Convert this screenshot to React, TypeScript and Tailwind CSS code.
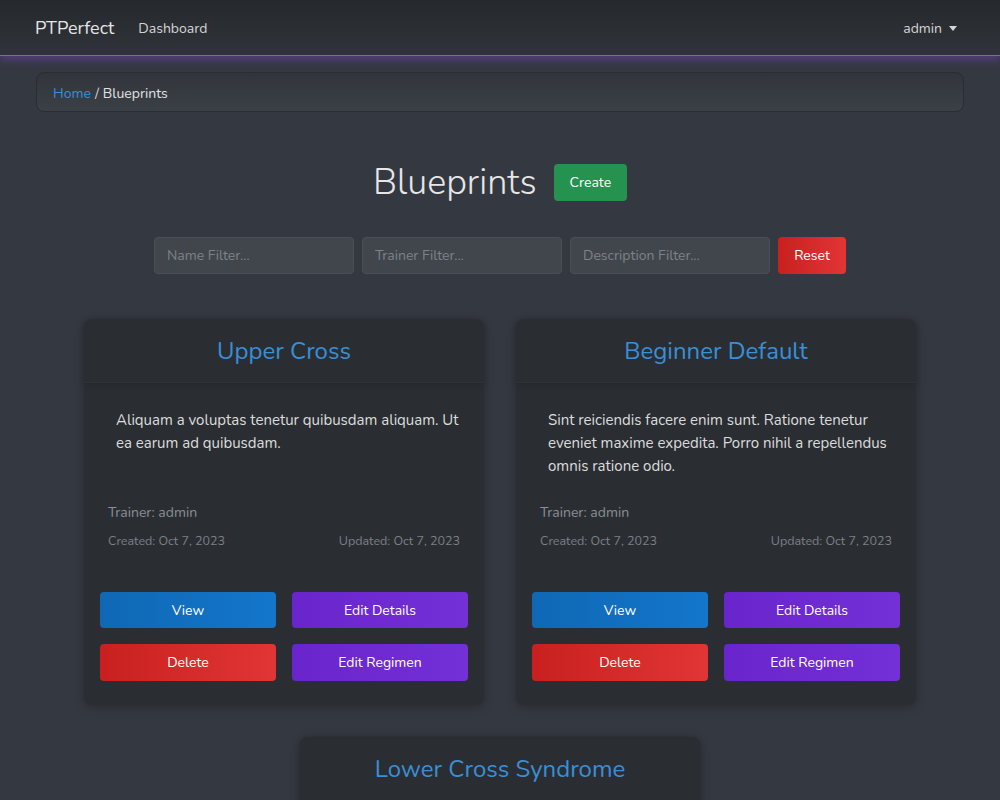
import React from 'react';

type Blueprint = {
  name: string;
  description: string;
  trainer: string;
  created: string;
  updated: string;
};

const blueprints: Blueprint[] = [
  {
    name: 'Upper Cross',
    description: 'Aliquam a voluptas tenetur quibusdam aliquam. Ut ea earum ad quibusdam.',
    trainer: 'admin',
    created: 'Oct 7, 2023',
    updated: 'Oct 7, 2023',
  },
  {
    name: 'Beginner Default',
    description: 'Sint reiciendis facere enim sunt. Ratione tenetur eveniet maxime expedita. Porro nihil a repellendus omnis ratione odio.',
    trainer: 'admin',
    created: 'Oct 7, 2023',
    updated: 'Oct 7, 2023',
  },
  {
    name: 'Lower Cross Syndrome',
    description: 'Et quia dolorem aut. Voluptatem repellat nam distinctio.',
    trainer: 'admin',
    created: 'Oct 7, 2023',
    updated: 'Oct 7, 2023',
  },
];

function BlueprintCard({ bp }: { bp: Blueprint }) {
  return (
    <div className="w-[400px] rounded-lg bg-[#2a2e33] shadow-[0_2px_10px_rgba(0,0,0,0.25)] flex flex-col">
      {/* Header */}
      <div className="h-[64px] flex items-center justify-center border-b border-[#2f3338] shadow-[0_2px_6px_rgba(0,0,0,0.12)] rounded-t-lg">
        <h2 className="text-[24px] text-[#3a8fd6] leading-none pt-[1px]">{bp.name}</h2>
      </div>

      {/* Body */}
      <div className="pl-8 pr-[18px] pt-[26px] h-[120px]">
        <p className="text-[15px] leading-[23px] text-[#dcdcdc]">{bp.description}</p>
      </div>

      <div className="px-6">
        <div className="text-[14px] text-[#8b8f95] leading-[20px]">Trainer: {bp.trainer}</div>
        <div className="flex justify-between mt-[9px] text-[12.5px] text-[#7c8087] leading-[18px]">
          <span>Created: {bp.created}</span>
          <span>Updated: {bp.updated}</span>
        </div>
      </div>

      {/* Actions */}
      <div className="grid grid-cols-2 gap-x-4 gap-y-4 px-4 pt-[42px] pb-6">
        <button className="h-[36px] rounded bg-gradient-to-r from-[#0f68b5] to-[#1476cb] text-white text-[14px]">View</button>
        <button className="h-[36px] rounded bg-gradient-to-r from-[#6a24cc] to-[#7330d6] text-white text-[14px]">Edit Details</button>
        <button className="h-[37px] rounded bg-gradient-to-r from-[#c81f1f] to-[#e23535] text-white text-[14px]">Delete</button>
        <button className="h-[37px] rounded bg-gradient-to-r from-[#6a24cc] to-[#7330d6] text-white text-[14px]">Edit Regimen</button>
      </div>
    </div>
  );
}

export default function App() {
  return (
    <div className="h-[800px] bg-[#343840] text-white font-['Nunito','Lato','Open_Sans',sans-serif] overflow-hidden">
      {/* Navbar */}
      <nav className="relative h-[56px] bg-gradient-to-b from-[#25282c] to-[#30343a] border-b border-[#8a5ad6] shadow-[0_4px_8px_rgba(120,70,200,0.45)] flex items-center px-[35px] pt-[2px]">
        <span className="text-[18px] text-[#e6e6e6] mr-[24px]">PTPerfect</span>
        <span className="text-[14px] text-[#d5d5d5]">Dashboard</span>
        <div className="ml-auto flex items-center gap-[7px] mr-[8px] text-[14px] text-[#d5d5d5]">
          admin
          <span className="w-0 h-0 border-l-[4px] border-r-[4px] border-t-[5px] border-l-transparent border-r-transparent border-t-[#d5d5d5]" />
        </div>
      </nav>

      <main className="px-[36px] pt-[16px]">
        {/* Breadcrumb */}
        <div className="h-[40px] rounded-lg border border-[#2a2e33] bg-gradient-to-b from-[#31353b] to-[#3b4047] flex items-center px-[16px] pt-[2px] text-[14px]">
          <span className="text-[#3a8fd6]">Home</span>
          <span className="text-[#cfcfcf] mx-[4px]">/</span>
          <span className="text-[#e2e2e2]">Blueprints</span>
        </div>

        {/* Title */}
        <div className="flex items-center justify-center gap-[17px] mt-[52px]">
          <h1 className="text-[36px] font-light text-[#e6e6e6] leading-none">Blueprints</h1>
          <button className="h-[37px] px-[16px] rounded bg-[#25924f] text-white text-[14px]">Create</button>
        </div>

        {/* Filters */}
        <div className="flex justify-center gap-[8px] mt-[36px]">
          <input className="w-[200px] h-[37px] rounded bg-[#41464d] border border-[#4a4f56] px-3 text-[14px] placeholder:text-[#7d8289]" placeholder="Name Filter..." />
          <input className="w-[200px] h-[37px] rounded bg-[#41464d] border border-[#4a4f56] px-3 text-[14px] placeholder:text-[#7d8289]" placeholder="Trainer Filter..." />
          <input className="w-[200px] h-[37px] rounded bg-[#41464d] border border-[#4a4f56] px-3 text-[14px] placeholder:text-[#7d8289]" placeholder="Description Filter..." />
          <button className="w-[68px] h-[37px] rounded bg-gradient-to-r from-[#c81f1f] to-[#e23535] text-white text-[14px]">Reset</button>
        </div>

        {/* Cards */}
        <div className="flex flex-wrap justify-center gap-x-[32px] gap-y-[32px] mt-[45px]">
          {blueprints.map((bp) => (
            <BlueprintCard key={bp.name} bp={bp} />
          ))}
        </div>
      </main>
    </div>
  );
}
